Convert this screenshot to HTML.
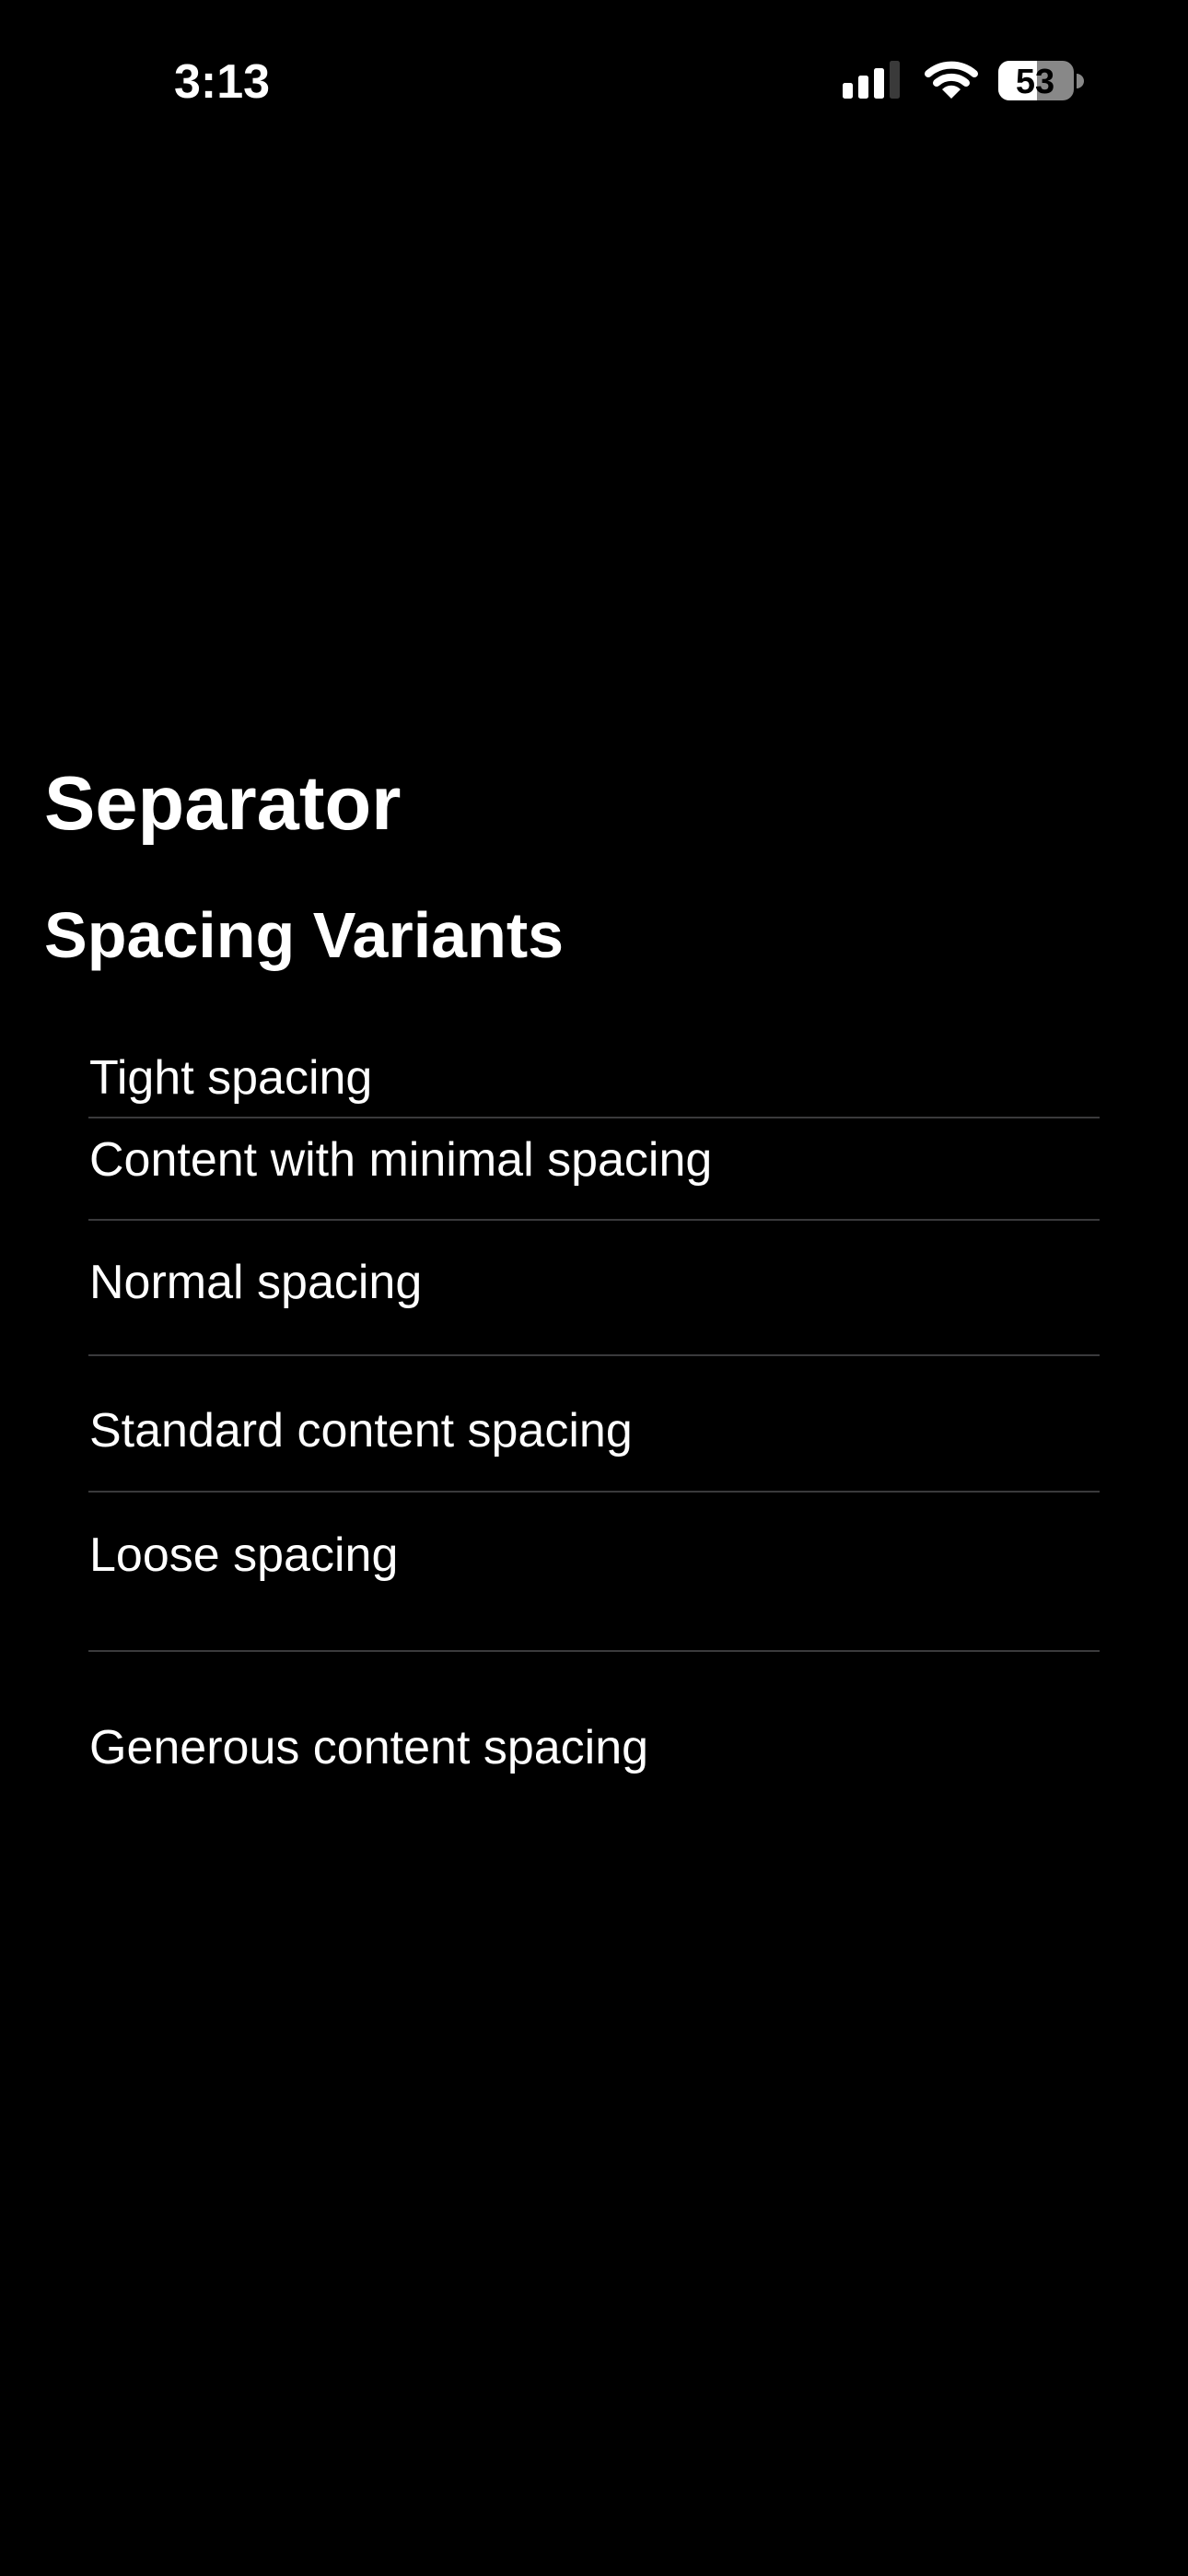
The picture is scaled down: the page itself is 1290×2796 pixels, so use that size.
<!DOCTYPE html>
<html><head><meta charset="utf-8"><style>
html,body{margin:0;padding:0;background:#000;}
body{width:1290px;height:2796px;position:relative;overflow:hidden;font-family:"Liberation Sans",sans-serif;color:#fff;}
.t{position:absolute;white-space:nowrap;line-height:1;}
.h1{left:48px;top:830px;font-size:83px;font-weight:bold;}
.h2{left:48px;top:980px;font-size:70px;font-weight:bold;}
.i{left:97px;font-size:52px;}
.ln{position:absolute;left:96px;width:1098px;height:2px;background:#3a3a3c;}
</style></head><body>
<div class="t" style="left:189px;top:63px;font-size:52px;font-weight:bold;">3:13</div>
<svg style="position:absolute;left:910px;top:60px" width="280" height="55" viewBox="910 60 280 55">
<rect x="915" y="90" width="11" height="17" rx="2.5" fill="#fff"/>
<rect x="932" y="82" width="11" height="25" rx="2.5" fill="#fff"/>
<rect x="949" y="74" width="11" height="33" rx="2.5" fill="#fff"/>
<rect x="966" y="66" width="11" height="41" rx="2.5" fill="#3a3a3a"/>
<path d="M1008 80 A38 38 0 0 1 1058 80" stroke="#fff" stroke-width="8" fill="none" stroke-linecap="round"/>
<path d="M1017 90 A24 24 0 0 1 1049 90" stroke="#fff" stroke-width="8" fill="none" stroke-linecap="round"/>
<path d="M1033 107 L1023 97 A14 14 0 0 1 1043 97 Z" fill="#fff"/>
<rect x="1084" y="66" width="82" height="43" rx="12" fill="#888"/>
<path d="M1096 66 H1126 V109 H1096 A12 12 0 0 1 1084 97 V78 A12 12 0 0 1 1096 66 Z" fill="#fff"/>
<path d="M1169 80 A8 8 0 0 1 1169 96 Z" fill="#888"/>
<text x="1124" y="101" font-family="Liberation Sans" font-weight="bold" font-size="38" text-anchor="middle" fill="#000">53</text>
</svg>
<div class="t h1">Separator</div>
<div class="t h2">Spacing Variants</div>
<div class="t i" style="top:1144px">Tight spacing</div>
<div class="ln" style="top:1212px"></div>
<div class="t i" style="top:1233px">Content with minimal spacing</div>
<div class="ln" style="top:1323px"></div>
<div class="t i" style="top:1366px">Normal spacing</div>
<div class="ln" style="top:1470px"></div>
<div class="t i" style="top:1527px">Standard content spacing</div>
<div class="ln" style="top:1618px"></div>
<div class="t i" style="top:1662px">Loose spacing</div>
<div class="ln" style="top:1791px"></div>
<div class="t i" style="top:1871px">Generous content spacing</div>
</body></html>
